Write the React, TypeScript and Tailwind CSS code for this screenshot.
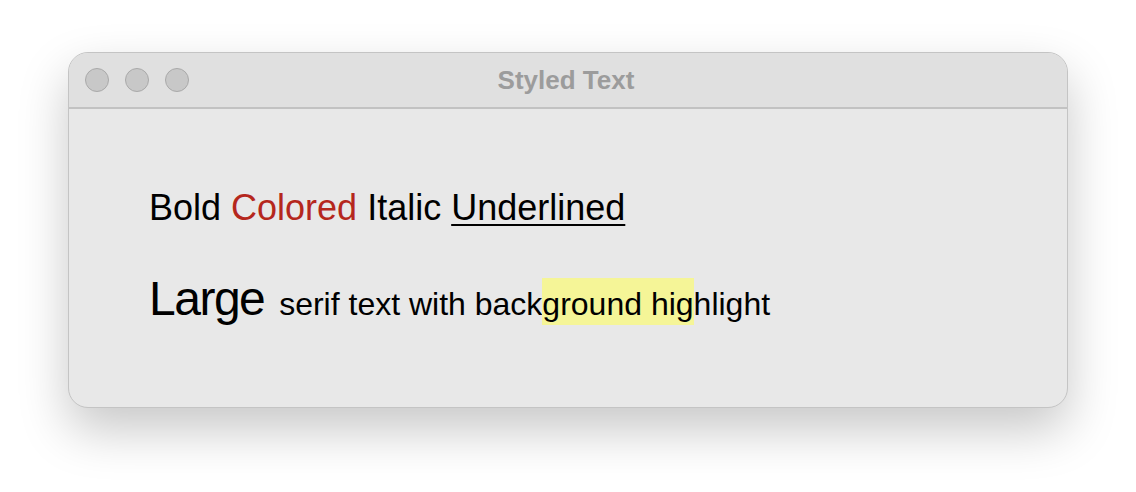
import React from 'react'

function TrafficLight() {
  return <div className="h-[24px] w-[24px] rounded-full border border-[#a9a9a9] bg-[#c8c8c8]" />
}

export default function App() {
  return (
    <div className="flex h-[492px] w-[1136px] items-start bg-white pl-[68px] pt-[52px]" style={{ fontFamily: '"Liberation Sans", Arial, sans-serif' }}>
      <div className="flex h-[356px] w-[1000px] flex-col overflow-hidden rounded-[20px] border border-[#c4c4c4] bg-[#e8e8e8] shadow-[0_22px_50px_rgba(0,0,0,0.22)]">
        <div className="relative flex h-[56px] shrink-0 items-center border-b-2 border-[#c2c2c2] bg-[#e0e0e0] pl-[16px]">
          <div className="flex gap-[16px]">
            <TrafficLight />
            <TrafficLight />
            <TrafficLight />
          </div>
          <div className="absolute inset-0 flex items-center justify-center pr-[4px] text-[26px] font-bold text-[#9c9c9c]">
            Styled Text
          </div>
        </div>
        <div className="flex flex-col pl-[80px] pt-[79px] text-black">
          <div className="text-[36px] leading-[40px]">
            <span>Bold </span>
            <span className="text-[#b5271d]">Colored</span>
            <span> Italic </span>
            <span className="underline decoration-2 underline-offset-[4px]">Underlined</span>
          </div>
          <div className="mt-[46px] leading-[50px]">
            <span className="text-[48px] tracking-[-1.5px]">Large</span>
            <span className="ml-[6px] text-[32px]">
              {' serif text with back'}
              <span className="inline-block bg-[#f5f597] pt-[8px] pb-[3px] leading-[36px]">ground hig</span>
              hlight
            </span>
          </div>
        </div>
      </div>
    </div>
  )
}
